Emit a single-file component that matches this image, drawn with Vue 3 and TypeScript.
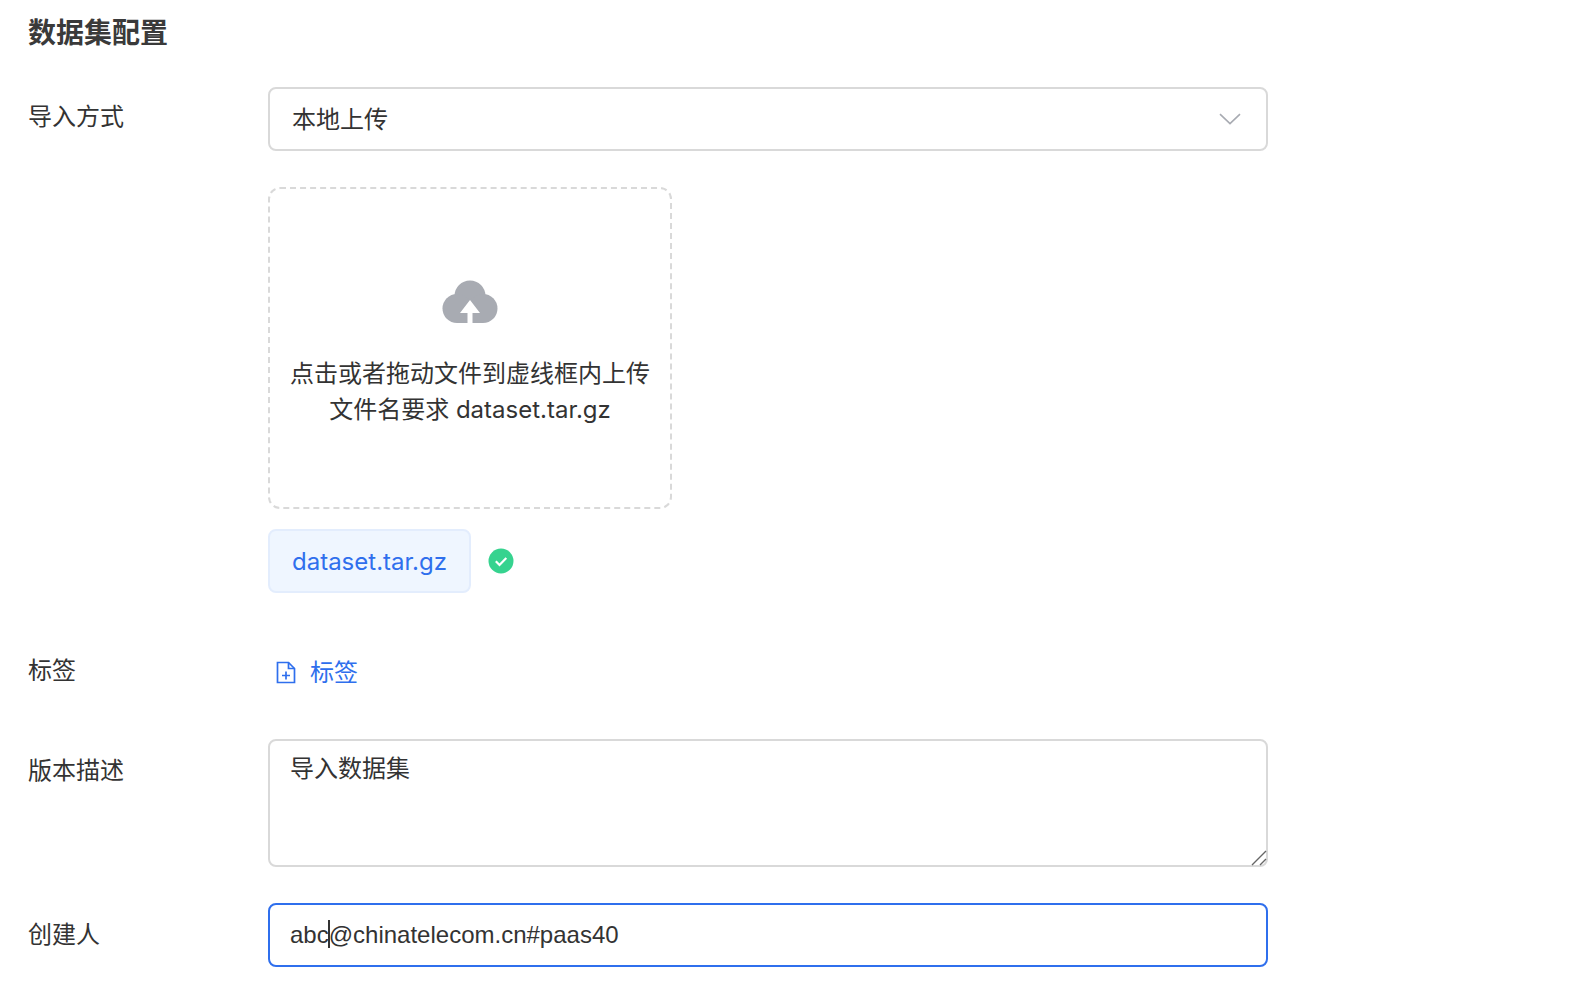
<script setup lang="ts">
const title: string = '数据集配置'
</script>

<template>
  <main class="page">
    <h2 class="title">{{ title }}</h2>

    <section class="row row-import">
      <label class="label">导入方式</label>
      <div class="control">
        <div class="select">
          <span class="select-value">本地上传</span>
          <svg class="chevron" width="22" height="12" viewBox="0 0 22 12" fill="none">
            <path d="M1 1.2 11 10.600 21 1.200" stroke="#a8abb2" stroke-width="1.600" />
          </svg>
        </div>
        <div class="dropzone">
          <svg class="cloud" width="58" height="44" viewBox="0 0 58 44">
            <g fill="#a8abb2">
              <circle cx="29" cy="16" r="15.500" />
              <circle cx="16" cy="28.500" r="14.500" />
              <circle cx="42" cy="28.500" r="14.500" />
              <rect x="16" y="20" width="26" height="23" />
            </g>
            <polygon fill="#fff" points="29,20 39,33 31.500,33 31.500,44 26.500,44 26.500,33 19,33" />
          </svg>
          <p class="hint">点击或者拖动文件到虚线框内上传</p>
          <p class="hint">文件名要求 dataset.tar.gz</p>
        </div>
        <div class="file-line">
          <div class="file-chip">dataset.tar.gz</div>
          <svg class="ok" width="26" height="26" viewBox="0 0 26 26">
            <circle cx="13" cy="13" r="12.500" fill="#36d38f" />
            <path d="M7.800 13.300 11.500 17 18.300 10" fill="none" stroke="#fff" stroke-width="2.200" />
          </svg>
        </div>
      </div>
    </section>

    <section class="row row-tag">
      <label class="label">标签</label>
      <div class="control tag-link">
        <svg class="tag-icon" width="20" height="23" viewBox="0 0 20 23" fill="none" stroke="#2f6fed" stroke-width="1.700">
          <path d="M1.500 1.500H12.500L18.500 7.500V21.500H1.500Z" />
          <path d="M12.500 1.500V7.500H18.500" />
          <path d="M6 14.500H14M10 10.500V18.500" />
        </svg>
        <span class="tag-text">标签</span>
      </div>
    </section>

    <section class="row row-desc">
      <label class="label label-low">版本描述</label>
      <div class="control area-wrap">
        <textarea class="area" readonly>导入数据集</textarea>
        <svg class="grip" width="18" height="18" viewBox="0 0 18 18" fill="none" stroke="#666" stroke-width="1.400">
          <path d="M3 17 17 3M11 17l6-6" />
        </svg>
      </div>
    </section>

    <section class="row row-owner">
      <label class="label label-low">创建人</label>
      <div class="control">
        <div class="input-wrap">
          <input class="input" readonly value="abc@chinatelecom.cn#paas40" />
          <span class="caret"></span>
        </div>
      </div>
    </section>
  </main>
</template>

<style>
html,
body {
  margin: 0;
  background: #fff;
}
</style>

<style scoped>
.page {
  width: 1574px;
  height: 998px;
  overflow: hidden;
  box-sizing: border-box;
  padding: 14px 0 0 28px;
  font-family: Inter, "Noto Sans CJK SC", sans-serif;
  color: #333;
  font-size: 24px;
}
.title {
  margin: 0 0 35px;
  font-size: 28px;
  line-height: 38px;
  font-weight: 700;
  color: #3a3a3a;
}
.row {
  display: flex;
  align-items: flex-start;
}
.label {
  width: 240px;
  flex: none;
  line-height: 60px;
  color: #333;
}
.row-tag .label {
  line-height: 58px;
}
.label-low {
  line-height: 64px;
}
.control {
  width: 1000px;
}
.row-tag {
  margin-top: 49px;
}
.row-desc {
  margin-top: 39px;
}
.row-owner {
  margin-top: 36px;
}
.select {
  box-sizing: border-box;
  height: 64px;
  border: 2px solid #d9d9d9;
  border-radius: 8px;
  padding: 0 25px 0 22px;
  display: flex;
  align-items: center;
  justify-content: space-between;
}
.select-value {
  position: relative;
  top: -2px;
}
.dropzone {
  box-sizing: border-box;
  width: 404px;
  height: 322px;
  margin-top: 36px;
  border: 2px dashed #d9d9d9;
  border-radius: 12px;
  display: flex;
  flex-direction: column;
  align-items: center;
  padding-top: 91px;
}
.cloud {
  margin-bottom: 32px;
}
.hint {
  margin: 0;
  line-height: 36px;
  white-space: nowrap;
  color: #333;
}
.file-line {
  display: flex;
  align-items: center;
  gap: 17px;
  margin-top: 20px;
}
.file-chip {
  box-sizing: border-box;
  height: 64px;
  line-height: 62px;
  padding: 0 22px;
  background: #eff6ff;
  border: 2px solid #e3edfd;
  border-radius: 8px;
  color: #2f6fed;
}
.tag-link {
  display: flex;
  align-items: center;
  gap: 14px;
  height: 58px;
  padding-left: 8px;
  box-sizing: border-box;
  color: #2f6fed;
}
.tag-icon {
  position: relative;
  top: 1px;
}
.tag-text {
  position: relative;
  top: -1px;
}
.area-wrap {
  position: relative;
}
.area {
  display: block;
  box-sizing: border-box;
  width: 1000px;
  height: 128px;
  border: 2px solid #d9d9d9;
  border-radius: 8px;
  padding: 10px 20px;
  font: inherit;
  line-height: 36px;
  color: #333;
  outline: none;
  resize: none;
}
.grip {
  position: absolute;
  right: 1px;
  bottom: 1px;
}
.input-wrap {
  position: relative;
}
.input {
  display: block;
  box-sizing: border-box;
  width: 1000px;
  height: 64px;
  border: 2px solid #2f6fed;
  border-radius: 8px;
  padding: 0 20px;
  font-family: "Liberation Sans", "Noto Sans CJK SC", sans-serif;
  font-size: 24px;
  color: #333;
  outline: none;
}
.caret {
  position: absolute;
  left: 60px;
  top: 17px;
  width: 2px;
  height: 28px;
  background: #333;
}
</style>
